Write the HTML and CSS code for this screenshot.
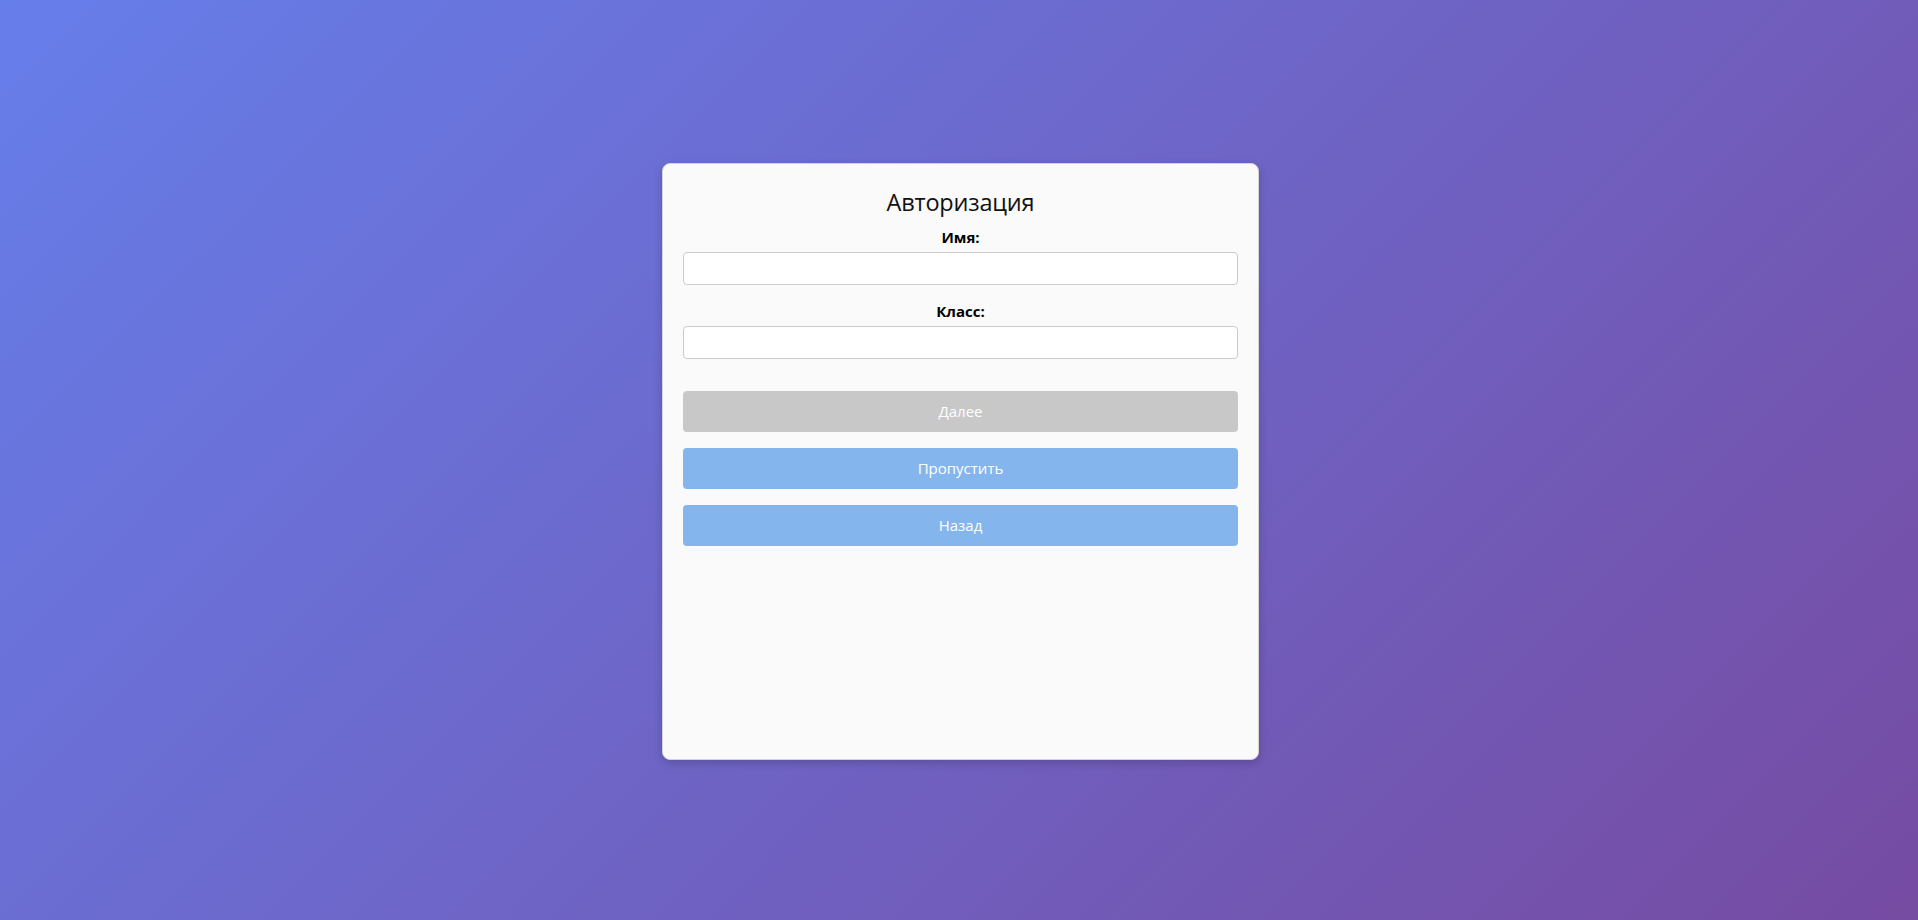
FILE: index.html
```html
<!DOCTYPE html>
<html lang="ru">
<head>
<meta charset="utf-8">
<title>Авторизация</title>
<link rel="stylesheet" href="styles.css">
</head>
<body>
<main class="page">
  <section class="card">
    <h2 class="title">Авторизация</h2>
    <form class="form">
      <div class="field">
        <label class="label" for="name">Имя:</label>
        <input class="input" id="name" type="text">
      </div>
      <div class="field">
        <label class="label" for="klass">Класс:</label>
        <input class="input" id="klass" type="text">
      </div>
      <div class="actions">
        <button class="btn btn-disabled" type="button" disabled>Далее</button>
        <button class="btn btn-blue" type="button">Пропустить</button>
        <button class="btn btn-blue" type="button">Назад</button>
      </div>
    </form>
  </section>
</main>
</body>
</html>
```
FILE: styles.css
```css
* { box-sizing: border-box; }
html, body {
  margin: 0;
  padding: 0;
  height: 100%;
}
body {
  font-family: "Open Sans", "Noto Sans", "Liberation Sans", sans-serif;
  background: linear-gradient(135deg, #667eea 0%, #764ba2 100%);
  color: #000;
}
.page {
  height: 920px;
  display: flex;
  align-items: center;
  justify-content: center;
  padding-left: 3px;
  padding-top: 2px;
}
.card {
  width: 597px;
  height: 597px;
  background: #fafafa;
  border: 1px solid #d4d4d4;
  border-radius: 8px;
  box-shadow: 0 3px 10px rgba(0, 0, 0, 0.18);
  padding: 22px 20px 20px;
}
.title {
  margin: 0;
  font-size: 23.5px;
  letter-spacing: -0.2px;
  line-height: 32px;
  font-weight: 400;
  text-align: center;
  color: #111;
}
.form {
  margin-top: 9px;
}
.field {
  display: flex;
  flex-direction: column;
  margin-bottom: 16px;
}
.label {
  font-size: 15px;
  line-height: 20px;
  font-weight: 700;
  text-align: center;
  margin-bottom: 5px;
}
.input {
  height: 33px;
  width: 100%;
  border: 1px solid #cbcbcb;
  border-radius: 4px;
  background: #fff;
  font: inherit;
  padding: 0 8px;
}
.actions {
  display: flex;
  flex-direction: column;
  gap: 16px;
  margin-top: 32px;
}
.btn {
  height: 41px;
  width: 100%;
  border: none;
  border-radius: 4px;
  color: #fff;
  font-family: inherit;
  font-size: 15px;
  cursor: pointer;
}
.btn-disabled {
  background: #c8c8c8;
  cursor: default;
}
.btn-blue {
  background: #84b6ed;
}
```
